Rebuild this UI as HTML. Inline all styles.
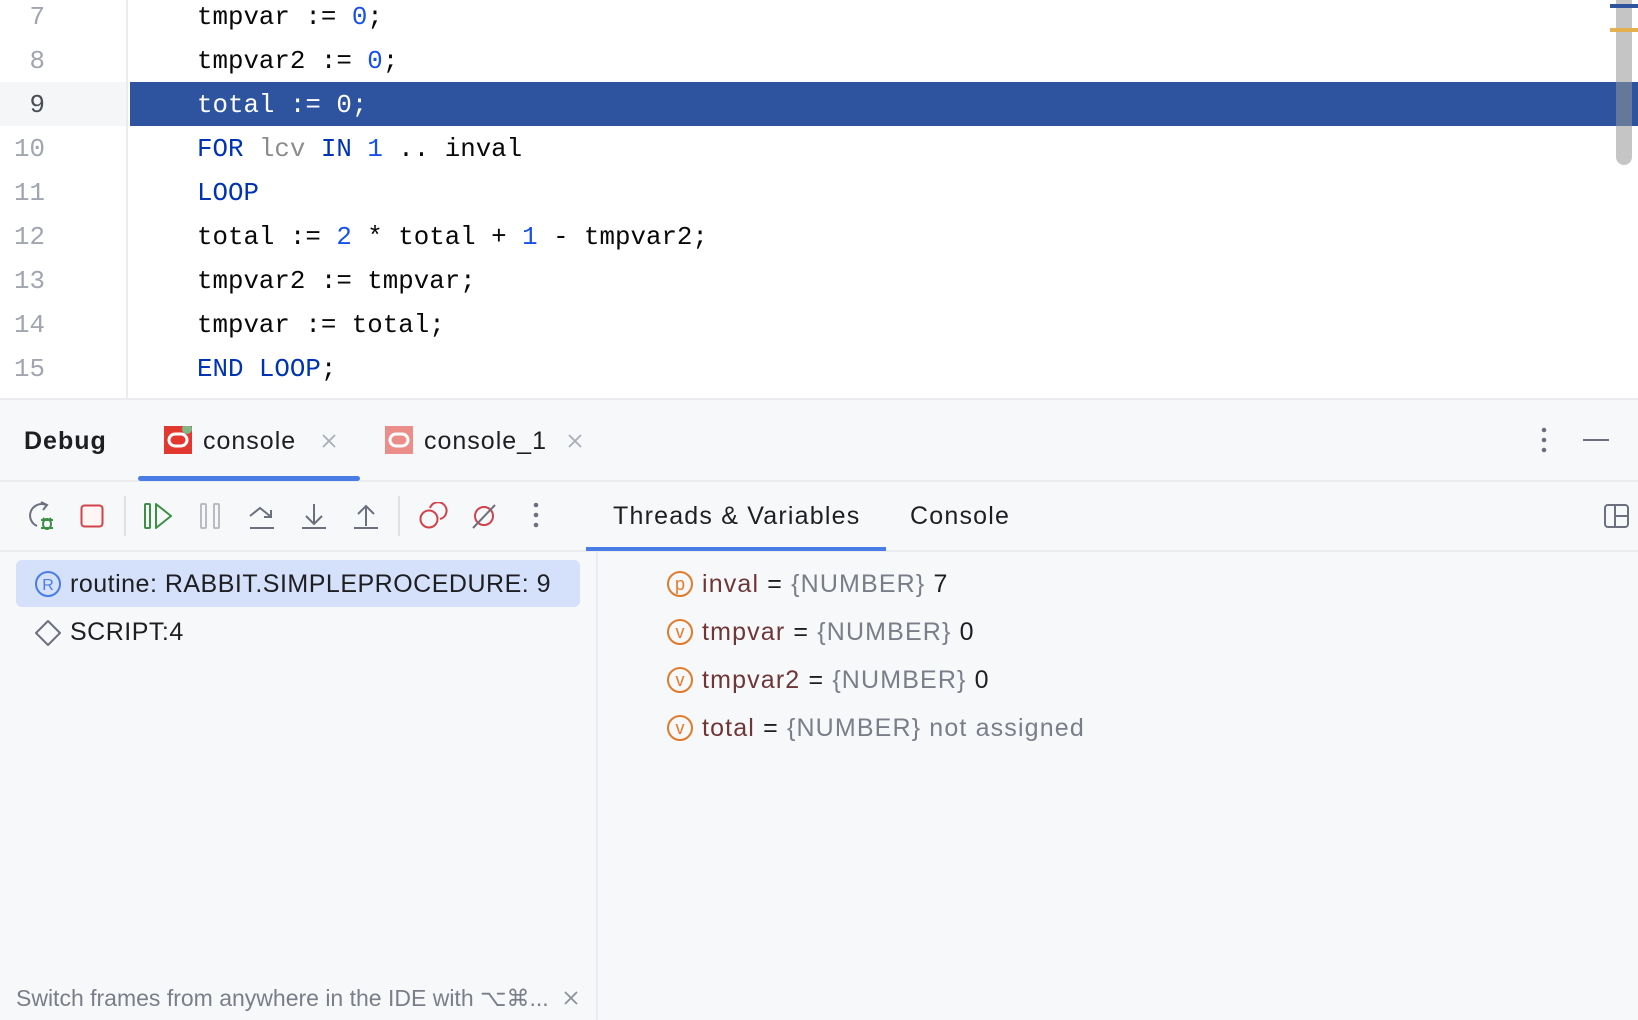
<!DOCTYPE html>
<html><head><meta charset="utf-8">
<style>
*{margin:0;padding:0;box-sizing:border-box}
body{width:1638px;height:1020px;overflow:hidden;background:#fff;position:relative;font-family:"Liberation Sans",sans-serif}
.ed{position:absolute;left:0;top:0;width:1638px;height:398px;background:#fff;overflow:hidden}
.gut{position:absolute;left:0;top:0;width:128px;height:398px;border-right:2px solid #ebecf0}
.row{position:absolute;left:0;height:44px;width:1638px;font-family:"Liberation Mono",monospace;font-size:25.8px;line-height:44px}
.num{position:absolute;left:0;width:45px;text-align:right;color:#a0a5b0}
.code{position:absolute;left:197px;color:#080808;white-space:pre}
.k{color:#0033b3}.n{color:#1750eb}.g{color:#8c8c8c}
.sel{position:absolute;left:130px;top:82px;width:1508px;height:44px;background:#2e54a0}
.selg{position:absolute;left:0;top:82px;width:128px;height:44px;background:#f5f6f8}
.panel{position:absolute;left:0;top:398px;width:1638px;height:622px;background:#f7f8fa;border-top:2px solid #ebecf0}
.ui{position:absolute;font-size:25px;color:#1e1f22;white-space:nowrap;line-height:30px;letter-spacing:1px}
.hline{position:absolute;left:0;height:2px;background:#ebecf0;width:1638px}
svg{position:absolute}
</style></head><body>
<div class="ed">
<div class="selg"></div>
<div class="gut"></div>
<div class="sel"></div>
<div class="row" style="top:-4px"><span class="num">7</span><span class="code">tmpvar := <span class="n">0</span>;</span></div>
<div class="row" style="top:40px"><span class="num">8</span><span class="code">tmpvar2 := <span class="n">0</span>;</span></div>
<div class="row" style="top:84px"><span class="num" style="color:#4a4d55">9</span><span class="code" style="color:#fff">total := 0;</span></div>
<div class="row" style="top:128px"><span class="num">10</span><span class="code"><span class="k">FOR</span> <span class="g">lcv</span> <span class="k">IN</span> <span class="n">1</span> .. inval</span></div>
<div class="row" style="top:172px"><span class="num">11</span><span class="code"><span class="k">LOOP</span></span></div>
<div class="row" style="top:216px"><span class="num">12</span><span class="code">total := <span class="n">2</span> * total + <span class="n">1</span> - tmpvar2;</span></div>
<div class="row" style="top:260px"><span class="num">13</span><span class="code">tmpvar2 := tmpvar;</span></div>
<div class="row" style="top:304px"><span class="num">14</span><span class="code">tmpvar := total;</span></div>
<div class="row" style="top:348px"><span class="num">15</span><span class="code"><span class="k">END LOOP</span>;</span></div>
<div style="position:absolute;left:1616px;top:0;width:16px;height:165px;border-radius:0 0 8px 8px;background:rgba(150,150,150,0.55)"></div>
<div style="position:absolute;left:1610px;top:4px;width:28px;height:4px;background:#2e54a0"></div>
<div style="position:absolute;left:1610px;top:28px;width:28px;height:4px;background:#e5b04f"></div>
</div>
<div class="panel"></div>
<div class="hline" style="top:480px"></div>
<div class="hline" style="top:550px"></div>
<div style="position:absolute;left:596px;top:552px;width:2px;height:468px;background:#ebecf0"></div>

<div class="ui" style="left:24px;top:426px;font-weight:bold">Debug</div>
<svg style="left:164px;top:426px" width="28" height="28" viewBox="0 0 28 28"><rect width="28" height="28" fill="#e2382f"/><rect x="5" y="8" width="18" height="12" rx="6" fill="none" stroke="#fff" stroke-width="3"/><circle cx="23" cy="3" r="5" fill="#7fb787"/></svg>
<div class="ui" style="left:203px;top:426px">console</div>
<svg style="left:320px;top:432px" width="18" height="18" viewBox="0 0 18 18"><path d="M3 3L15 15M15 3L3 15" stroke="#a8adb7" stroke-width="1.8"/></svg>
<svg style="left:385px;top:426px" width="28" height="28" viewBox="0 0 28 28"><rect width="28" height="28" fill="#eb8e8a"/><rect x="5" y="8" width="18" height="12" rx="6" fill="none" stroke="#fff" stroke-width="3"/></svg>
<div class="ui" style="left:424px;top:426px">console_1</div>
<svg style="left:566px;top:432px" width="18" height="18" viewBox="0 0 18 18"><path d="M3 3L15 15M15 3L3 15" stroke="#a8adb7" stroke-width="1.8"/></svg>
<div style="position:absolute;left:138px;top:476px;width:222px;height:5px;border-radius:3px;background:#4a7ce6"></div>
<svg style="left:1534px;top:426px" width="20" height="30"><circle cx="10" cy="4" r="2.3" fill="#6c707e"/><circle cx="10" cy="14" r="2.3" fill="#6c707e"/><circle cx="10" cy="24" r="2.3" fill="#6c707e"/></svg>
<div style="position:absolute;left:1583px;top:439px;width:26px;height:2px;background:#6c707e"></div>

<svg style="left:26px;top:500px" width="34" height="34" viewBox="0 0 34 34"><path d="M20 5A11 11 0 1 0 11 26" fill="none" stroke="#6c707e" stroke-width="2"/><path d="M15 2L21 5L17 10" fill="none" stroke="#6c707e" stroke-width="2"/><ellipse cx="21" cy="24" rx="4" ry="5" fill="none" stroke="#3d8f45" stroke-width="2"/><path d="M15 20H27M15 28H27M17 18l2 2M25 18l-2 2" stroke="#3d8f45" stroke-width="2"/></svg>
<svg style="left:80px;top:504px" width="24" height="24"><rect x="1.5" y="1.5" width="21" height="21" rx="3" fill="#fff5f5" stroke="#d0434a" stroke-width="2"/></svg>
<div style="position:absolute;left:124px;top:496px;width:2px;height:40px;background:#dfe1e5"></div>
<svg style="left:144px;top:502px" width="30" height="28"><rect x="1" y="2" width="5" height="24" rx="1" fill="none" stroke="#3d8f45" stroke-width="2"/><path d="M12 2L27 14L12 26Z" fill="none" stroke="#3d8f45" stroke-width="2" stroke-linejoin="round"/></svg>
<svg style="left:199px;top:502px" width="24" height="28"><rect x="2" y="2" width="5" height="24" rx="1" fill="none" stroke="#b8bbc2" stroke-width="2"/><rect x="15" y="2" width="5" height="24" rx="1" fill="none" stroke="#b8bbc2" stroke-width="2"/></svg>
<svg style="left:248px;top:502px" width="28" height="28"><path d="M2 14L12 6L22 14M16 15H23V8M2 26H26" fill="none" stroke="#6c707e" stroke-width="2"/></svg>
<svg style="left:300px;top:502px" width="28" height="28"><path d="M14 2V22M6 14L14 22L22 14M2 26H26" fill="none" stroke="#6c707e" stroke-width="2"/></svg>
<svg style="left:352px;top:502px" width="28" height="28"><path d="M14 24V4M6 12L14 4L22 12M2 26H26" fill="none" stroke="#6c707e" stroke-width="2"/></svg>
<div style="position:absolute;left:398px;top:496px;width:2px;height:40px;background:#dfe1e5"></div>
<svg style="left:418px;top:502px" width="30" height="28"><circle cx="11" cy="17" r="8.5" fill="none" stroke="#d0434a" stroke-width="2"/><path d="M12 6A8.5 8.5 0 1 1 22 17" fill="none" stroke="#d0434a" stroke-width="2"/></svg>
<svg style="left:470px;top:502px" width="28" height="28"><circle cx="14" cy="14" r="9" fill="none" stroke="#d0434a" stroke-width="2"/><path d="M3 26L25 3" stroke="#6c707e" stroke-width="2"/></svg>
<svg style="left:526px;top:502px" width="20" height="30"><circle cx="10" cy="3" r="2.3" fill="#6c707e"/><circle cx="10" cy="13" r="2.3" fill="#6c707e"/><circle cx="10" cy="23" r="2.3" fill="#6c707e"/></svg>

<div class="ui" style="left:613px;top:501px;letter-spacing:1.2px">Threads &amp; Variables</div>
<div class="ui" style="left:910px;top:501px;letter-spacing:1.2px">Console</div>
<div style="position:absolute;left:586px;top:547px;width:300px;height:4px;background:#4a7ce6"></div>
<svg style="left:1604px;top:504px" width="25" height="24"><rect x="1" y="1" width="23" height="22" rx="3" fill="none" stroke="#6c707e" stroke-width="2"/><path d="M11 1V23M11 12H24" stroke="#6c707e" stroke-width="2"/></svg>

<div style="position:absolute;left:16px;top:560px;width:564px;height:47px;border-radius:6px;background:#d5e0fa"></div>
<svg style="left:34px;top:570px" width="28" height="28"><circle cx="14" cy="14" r="12" fill="none" stroke="#4a7ce6" stroke-width="2"/><text x="14" y="20" text-anchor="middle" font-family="Liberation Sans" font-size="16" fill="#4a7ce6">R</text></svg>
<div class="ui" style="left:70px;top:569px;letter-spacing:0.5px">routine: RABBIT.SIMPLEPROCEDURE: 9</div>
<svg style="left:33px;top:618px" width="30" height="30"><path d="M15 3L27 15L15 27L3 15Z" fill="none" stroke="#6c707e" stroke-width="2" stroke-linejoin="round"/></svg>
<div class="ui" style="left:70px;top:617px;letter-spacing:0.5px">SCRIPT:4</div>

<svg style="left:666px;top:570px" width="28" height="28"><circle cx="14" cy="14" r="12" fill="none" stroke="#e07b2c" stroke-width="2"/><text x="14" y="20" text-anchor="middle" font-family="Liberation Sans" font-size="18" fill="#e07b2c">p</text></svg>
<div class="ui" style="left:702px;top:569px;letter-spacing:1.15px"><span style="color:#6e3636">inval</span> = <span style="color:#7a7e89">{NUMBER}</span> 7</div>
<svg style="left:666px;top:618px" width="28" height="28"><circle cx="14" cy="14" r="12" fill="none" stroke="#e07b2c" stroke-width="2"/><text x="14" y="20" text-anchor="middle" font-family="Liberation Sans" font-size="18" fill="#e07b2c">v</text></svg>
<div class="ui" style="left:702px;top:617px;letter-spacing:1.15px"><span style="color:#6e3636">tmpvar</span> = <span style="color:#7a7e89">{NUMBER}</span> 0</div>
<svg style="left:666px;top:666px" width="28" height="28"><circle cx="14" cy="14" r="12" fill="none" stroke="#e07b2c" stroke-width="2"/><text x="14" y="20" text-anchor="middle" font-family="Liberation Sans" font-size="18" fill="#e07b2c">v</text></svg>
<div class="ui" style="left:702px;top:665px;letter-spacing:1.15px"><span style="color:#6e3636">tmpvar2</span> = <span style="color:#7a7e89">{NUMBER}</span> 0</div>
<svg style="left:666px;top:714px" width="28" height="28"><circle cx="14" cy="14" r="12" fill="none" stroke="#e07b2c" stroke-width="2"/><text x="14" y="20" text-anchor="middle" font-family="Liberation Sans" font-size="18" fill="#e07b2c">v</text></svg>
<div class="ui" style="left:702px;top:713px;letter-spacing:1.15px"><span style="color:#6e3636">total</span> = <span style="color:#7a7e89">{NUMBER} not assigned</span></div>

<div class="ui" style="left:16px;top:983px;font-size:23px;color:#7a7e89;letter-spacing:0px">Switch frames from anywhere in the IDE with ⌥⌘...</div>
<svg style="left:562px;top:989px" width="18" height="18"><path d="M3 3L15 15M15 3L3 15" stroke="#8c909a" stroke-width="1.8"/></svg>
</body></html>
